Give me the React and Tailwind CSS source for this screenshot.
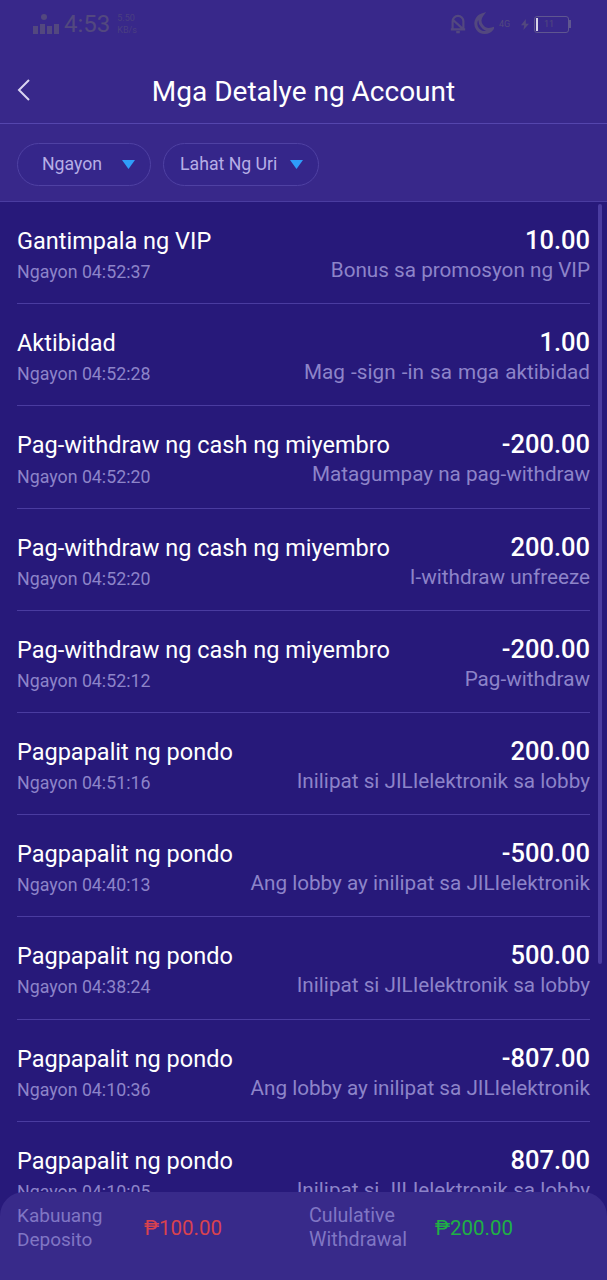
import React from 'react';

const rows = [
    ['Gantimpala ng VIP', '10.00', '04:52:37', 'Bonus sa promosyon ng VIP'],
    ['Aktibidad', '1.00', '04:52:28', 'Mag -sign -in sa mga aktibidad', '[word-spacing:1px]'],
    ['Pag-withdraw ng cash ng miyembro', '-200.00', '04:52:20', 'Matagumpay na pag-withdraw'],
    ['Pag-withdraw ng cash ng miyembro', '200.00', '04:52:20', 'I-withdraw unfreeze'],
    ['Pag-withdraw ng cash ng miyembro', '-200.00', '04:52:12', 'Pag-withdraw'],
    ['Pagpapalit ng pondo', '200.00', '04:51:16', 'Inilipat si JILIelektronik sa lobby'],
    ['Pagpapalit ng pondo', '-500.00', '04:40:13', 'Ang lobby ay inilipat sa JILIelektronik'],
    ['Pagpapalit ng pondo', '500.00', '04:38:24', 'Inilipat si JILIelektronik sa lobby'],
    ['Pagpapalit ng pondo', '-807.00', '04:10:36', 'Ang lobby ay inilipat sa JILIelektronik'],
    ['Pagpapalit ng pondo', '807.00', '04:10:05', 'Inilipat si JILIelektronik sa lobby'],
];

const StatusBar = () => (
    <div className="flex h-[60px] items-start justify-between pl-[33px] pr-[36px] pt-[10px] text-[#53487f]">
        <div className="flex items-center gap-[4px]">
            <svg width="27" height="24" viewBox="0 0 27 24" fill="currentColor">
                <circle cx="11" cy="5" r="3" />
                <rect x="0" y="14" width="5" height="8" />
                <rect x="7" y="12" width="5" height="10" />
                <rect x="14" y="14" width="5" height="8" />
                <rect x="21" y="12" width="5" height="10" />
            </svg>
            <span className="text-[24px] leading-[28px]">4:53</span>
            <div className="ml-[3px] flex flex-col text-[9px] leading-[12px] opacity-70">
                <span>5.50</span>
                <span>KB/s</span>
            </div>
        </div>
        <div className="flex items-center gap-[5px] pt-[2px]">
            <svg width="18" height="24" viewBox="0 0 20 24" fill="none" stroke="currentColor" strokeWidth="2.4">
                <path d="M4 18V9a6 6 0 0 1 12 0v9M2 18h16M8 21h4M4 7l12 11" />
            </svg>
            <svg width="22" height="24" viewBox="0 0 22 24" fill="none" stroke="currentColor" strokeWidth="3">
                <path d="M10 3a9 9 0 1 0 10 14 9 9 0 0 1-10-14z" />
            </svg>
            <span className="w-[17px] text-[9px] leading-[10px]">4G</span>
            <svg width="8" height="13" viewBox="0 0 10 14" fill="currentColor">
                <path d="M6 0 0 8h4l-1 6 7-8H6z" />
            </svg>
            <div className="flex items-center">
                <div className="flex h-[17px] w-[35px] items-center rounded-[3px] border border-[#5f5690] pl-[1px]">
                    <div className="h-[13px] w-[2px] bg-[#d8d4e8]" />
                    <span className="ml-[6px] text-[9px] leading-none">11</span>
                </div>
                <div className="h-[8px] w-[2px] bg-[#5f5690]" />
            </div>
        </div>
    </div>
);

const Filter = ({ label, className }) => (
    <div className={`flex h-[43px] items-center justify-between rounded-full border border-[#4f41a3] bg-[#35268a] ${className}`}>
        <span className="text-[17.7px] text-[#b6aee6]">{label}</span>
        <svg width="13" height="9" viewBox="0 0 13 9" fill="#2f9dfa">
            <path d="M0 0h13L6.5 9z" />
        </svg>
    </div>
);

const Row = ({ title, amount, time, note, noteClass = '' }) => (
    <div className="mx-[17px] flex h-[102.2px] flex-col border-b border-[#4a3ca0] pt-[19px]">
        <div className="flex items-center justify-between leading-[40px]">
            <span className="text-[23.5px] text-white">{title}</span>
            <span className="-translate-y-[1px] text-[25.5px] font-medium text-white">{amount}</span>
        </div>
        <div className="-mt-[5px] flex items-center justify-between">
            <span className="translate-y-[1px] text-[17.8px] text-[#8d84c9]">
                Ngayon {time}
            </span>
            <span className={`-translate-y-[1px] text-[20.7px] text-[#8d84c9] ${noteClass}`}>{note}</span>
        </div>
    </div>
);

export default function App() {
    return (
        <div className="relative flex h-[1280px] w-[607px] flex-col overflow-hidden bg-[#38288a]" style={{ fontFamily: 'Roboto, sans-serif' }}>
            <StatusBar />

            <div className="relative flex h-[64px] items-center justify-center border-b border-[#5546ad]">
                <svg className="absolute left-[15px] top-[18px]" width="16" height="24" viewBox="0 0 16 24" fill="none" stroke="#d9d4f2" strokeWidth="2">
                    <path d="M14 2 4 12l10 10" />
                </svg>
                <h1 className="text-[28px] text-white">Mga Detalye ng Account</h1>
            </div>

            <div className="flex h-[78px] items-start gap-[12px] border-b border-[#4a3ca0] pl-[17px] pt-[19px]">
                <Filter label="Ngayon" className="w-[134px] pl-[24px] pr-[15px]" />
                <Filter label="Lahat Ng Uri" className="w-[156px] pl-[16px] pr-[15px]" />
            </div>

            <div className="relative min-h-0 flex-1 overflow-hidden bg-[#27197a]">
                {rows.map((r, i) => (
                    <Row key={i} title={r[0]} amount={r[1]} time={r[2]} note={r[3]} noteClass={r[4]} />
                ))}
                <div className="absolute right-[5px] top-[2px] h-[760px] w-[4px] rounded-full bg-[#4a3ca0]" />
            </div>

            <div className="absolute bottom-0 left-0 flex h-[88px] w-full items-start rounded-t-[24px] bg-[#382a8a] pl-[17px] pt-[12px]">
                <div className="w-[127px] text-[19px] leading-[24px] text-[#8076c4]">
                    Kabuuang<br />Deposito
                </div>
                <div className="w-[165px] pt-[11px] text-[20.5px] leading-[26px] text-[#d9424f]">₱100.00</div>
                <div className="w-[126px] text-[19.7px] leading-[24px] text-[#8076c4]">
                    Cululative<br />Withdrawal
                </div>
                <div className="pt-[11px] text-[20.5px] leading-[26px] text-[#1fb045]">₱200.00</div>
            </div>
        </div>
    );
}
